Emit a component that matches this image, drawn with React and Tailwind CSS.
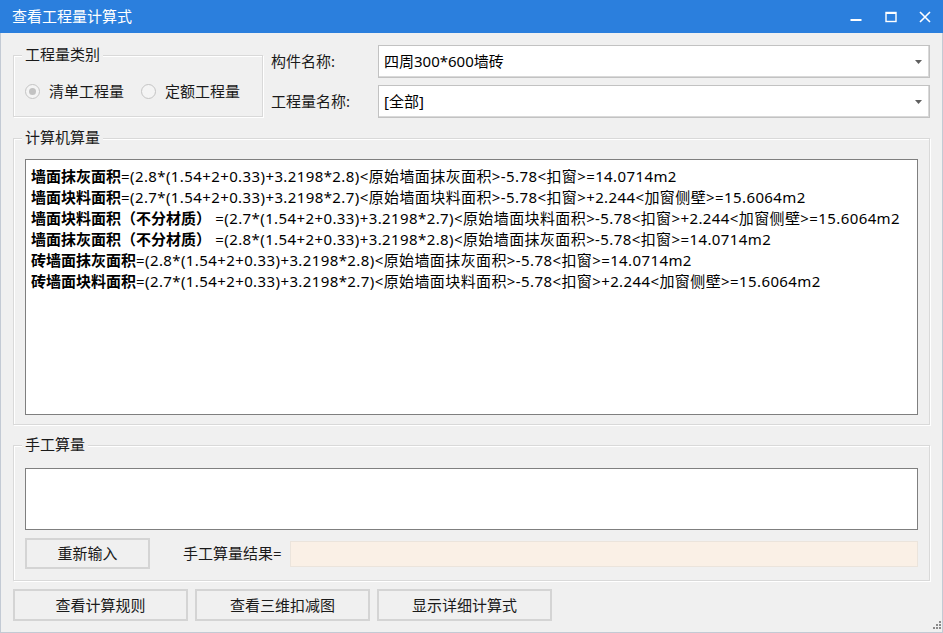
import React from "react";

const FONT = { fontFamily: '"Noto Sans", "Noto Sans CJK SC", sans-serif' };

const lines = [
  ["墙面抹灰面积", "=(2.8*(1.54+2+0.33)+3.2198*2.8)<原始墙面抹灰面积>-5.78<扣窗>=14.0714m2"],
  ["墙面块料面积", "=(2.7*(1.54+2+0.33)+3.2198*2.7)<原始墙面块料面积>-5.78<扣窗>+2.244<加窗侧壁>=15.6064m2"],
  ["墙面块料面积（不分材质）", " =(2.7*(1.54+2+0.33)+3.2198*2.7)<原始墙面块料面积>-5.78<扣窗>+2.244<加窗侧壁>=15.6064m2"],
  ["墙面抹灰面积（不分材质）", " =(2.8*(1.54+2+0.33)+3.2198*2.8)<原始墙面抹灰面积>-5.78<扣窗>=14.0714m2"],
  ["砖墙面抹灰面积", "=(2.8*(1.54+2+0.33)+3.2198*2.8)<原始墙面抹灰面积>-5.78<扣窗>=14.0714m2"],
  ["砖墙面块料面积", "=(2.7*(1.54+2+0.33)+3.2198*2.7)<原始墙面块料面积>-5.78<扣窗>+2.244<加窗侧壁>=15.6064m2"],
];

function GroupBox({ label, className, children }) {
  return (
    <div
      className={
        "relative border border-[#d9d9d9] shadow-[inset_1px_1px_0_#ffffff,1px_1px_0_#ffffff] " +
        className
      }
    >
      <span className="absolute left-[8px] top-[-12px] bg-[#f0f0f0] px-[3px] text-[15px] leading-[20px] text-[#1a1a1a]">
        {label}
      </span>
      {children}
    </div>
  );
}

function Combo({ value }) {
  return (
    <div className="flex h-[33px] flex-1 items-center border border-[#c2c2c2] bg-white pl-[5px] pr-[7px] shadow-[inset_-1px_-1px_0_#d9d9d9]">
      <span className="flex-1 text-[15px] text-black">{value}</span>
      <svg width="7" height="4" viewBox="0 0 7 4">
        <path d="M0 0 H7 L3.5 4 Z" fill="#5f5f5f" />
      </svg>
    </div>
  );
}

function Radio({ checked, label }) {
  return (
    <div className="flex items-center gap-[9px]">
      <span className="flex h-[15px] w-[15px] items-center justify-center rounded-full border border-[#c4c4c4] bg-[#f4f4f4]">
        {checked && <span className="h-[7px] w-[7px] rounded-full bg-[#c2c2c2]" />}
      </span>
      <span className="text-[15px] text-[#1a1a1a]">{label}</span>
    </div>
  );
}

function Button({ children, className }) {
  return (
    <div
      className={
        "flex items-center justify-center border-2 border-[#d4d4d4] bg-[#f0f0f0] text-[15px] text-[#1a1a1a] " +
        className
      }
    >
      {children}
    </div>
  );
}

export default function App() {
  return (
    <div
      style={FONT}
      className="flex h-[633px] w-[943px] flex-col border-x border-b border-[#c3cad4] bg-[#f0f0f0]"
    >
      {/* Title bar */}
      <div className="-mx-px flex h-[33px] shrink-0 items-center bg-[#2b7fdd] pl-[12px] text-white">
        <span className="flex-1 text-[15px]">查看工程量计算式</span>
        <div className="flex items-center">
          <div className="flex h-[33px] w-[35px] items-center justify-center">
            <svg width="12" height="12" viewBox="0 0 12 12">
              <rect x="0.5" y="8" width="11" height="2" fill="#fff" />
            </svg>
          </div>
          <div className="flex h-[33px] w-[35px] items-center justify-center">
            <svg width="12" height="12" viewBox="0 0 12 12">
              <rect x="1" y="1.5" width="10" height="9" fill="none" stroke="#fff" strokeWidth="1.4" />
              <rect x="1" y="1" width="10" height="2" fill="#fff" />
            </svg>
          </div>
          <div className="flex h-[33px] w-[35px] items-center justify-center pr-[2px]">
            <svg width="12" height="12" viewBox="0 0 12 12">
              <path d="M1 1 L11 11 M11 1 L1 11" stroke="#fff" strokeWidth="1.6" />
            </svg>
          </div>
        </div>
      </div>

      {/* Body */}
      <div className="flex flex-1 flex-col px-[12px] pt-[12px]">
        {/* Top row */}
        <div className="flex h-[73px] items-start">
          <GroupBox label="工程量类别" className="mt-[10px] h-[62px] w-[250px]">
            <div className="flex h-full items-center gap-[17px] pl-[11px] pt-[10px]">
              <Radio checked label="清单工程量" />
              <Radio label="定额工程量" />
            </div>
          </GroupBox>
          <div className="ml-[8px] flex flex-1 flex-col gap-[7px]">
            <div className="flex items-center">
              <span className="w-[107px] text-[15px] text-[#1a1a1a]">构件名称:</span>
              <Combo value="四周300*600墙砖" />
            </div>
            <div className="flex items-center">
              <span className="w-[107px] text-[15px] text-[#1a1a1a]">工程量名称:</span>
              <Combo value="[全部]" />
            </div>
          </div>
        </div>

        {/* Computer calculation */}
        <GroupBox label="计算机算量" className="mt-[20px] h-[287px] pl-[11px] pr-[11px] pt-[20px]">
          <div className="h-[256px] border border-[#7f7f7f] bg-white pl-[5px] pt-[6px] text-[15px] leading-[21px] text-black">
            {lines.map(([b, r], i) => (
              <div key={i} className="whitespace-pre">
                <span className="font-bold">{b}</span>
                <span className="tracking-[0.4px]">{r}</span>
              </div>
            ))}
          </div>
        </GroupBox>

        {/* Manual calculation */}
        <GroupBox label="手工算量" className="mt-[20px] h-[136px] pl-[11px] pr-[11px] pt-[22px]">
          <div className="h-[62px] border border-[#7f7f7f] bg-white" />
          <div className="mt-[8px] flex h-[31px] items-center">
            <Button className="h-[31px] w-[125px]">重新输入</Button>
            <span className="ml-[33px] text-[15px] text-[#1a1a1a]">手工算量结果=</span>
            <div className="ml-[8px] h-[26px] flex-1 border border-[#ebe4dc] bg-[#faf0e6]" />
          </div>
        </GroupBox>

        {/* Bottom buttons */}
        <div className="mt-[8px] flex gap-[7px]">
          <Button className="h-[32px] w-[175px]">查看计算规则</Button>
          <Button className="h-[32px] w-[175px]">查看三维扣减图</Button>
          <Button className="h-[32px] w-[175px]">显示详细计算式</Button>
        </div>

        {/* Resize grip */}
        <div className="-mr-[11px] mt-auto flex justify-end pb-[2px]">
          <svg width="10" height="10" viewBox="0 0 10 10">
            <rect x="8" y="0" width="2" height="2" fill="#8a8a8a" />
            <rect x="5" y="3" width="2" height="2" fill="#8a8a8a" />
            <rect x="8" y="3" width="2" height="2" fill="#8a8a8a" />
            <rect x="2" y="6" width="2" height="2" fill="#8a8a8a" />
            <rect x="5" y="6" width="2" height="2" fill="#8a8a8a" />
            <rect x="8" y="6" width="2" height="2" fill="#8a8a8a" />
          </svg>
        </div>
      </div>
    </div>
  );
}
